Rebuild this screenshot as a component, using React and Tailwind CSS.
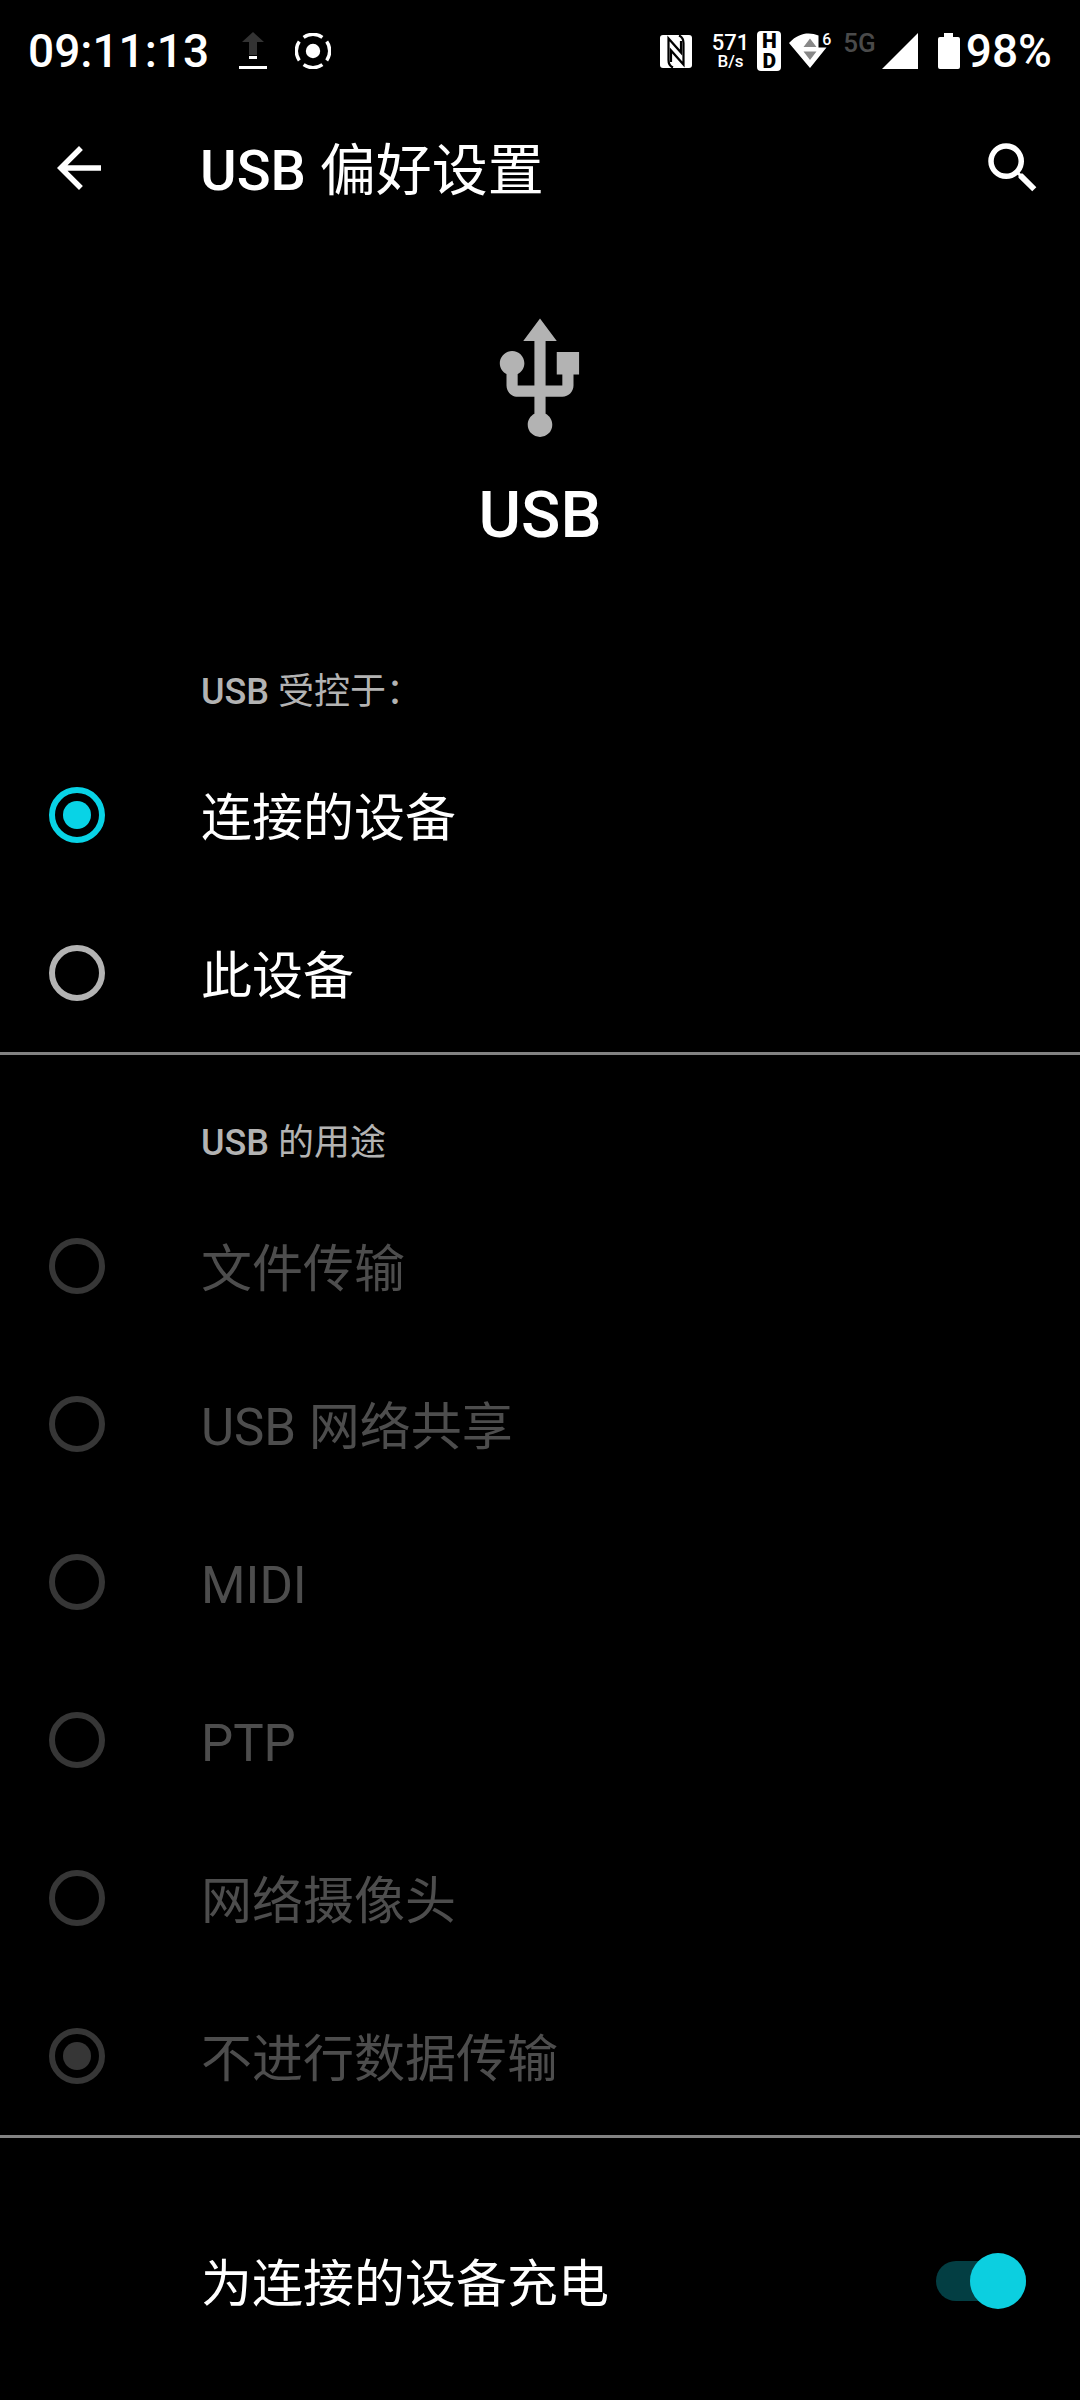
import { useState } from "react";
import { MdArrowBack, MdSearch, MdUsb } from "react-icons/md";

const CONTROLLERS = ["连接的设备", "此设备"];

const USES = [
  "文件传输",
  "USB 网络共享",
  "MIDI",
  "PTP",
  "网络摄像头",
  "不进行数据传输",
];

function StatusBar() {
  return (
    <div className="flex h-[102px] items-center justify-between px-7 font-medium">
      <div className="flex items-center">
        <span className="text-[46px] leading-none">09:11:13</span>

        {/* upload */}
        <svg viewBox="0 0 28 38" className="ml-[30px] h-[38px] w-7">
          <path d="M14 0L25 10H18V23H10V10H3z" fill="#333" />
          <path d="M10 24h8v3h-8zM0 34h28v3H0z" fill="#fff" />
        </svg>

        {/* screen recorder */}
        <svg viewBox="0 0 36 36" className="ml-7 size-9" fill="none" stroke="#fff">
          <circle cx="18" cy="18" r="7.2" fill="#fff" stroke="none" />
          <path
            strokeWidth="3.4"
            d="M8.6 4.3A16.300 16.300 0 0 1 27.4 4.3M31.7 8.6A16.300 16.300 0 0 1 31.7 27.4M27.4 31.7A16.300 16.300 0 0 1 8.6 31.7M4.3 27.4A16.300 16.300 0 0 1 4.3 8.6"
          />
        </svg>
      </div>

      <div className="flex items-center">
        {/* NFC */}
        <svg viewBox="0 0 32 33" className="h-[33px] w-8">
          <rect width="32" height="33" rx="3" fill="#fff" />
          <path
            d="M13 32.500C9.500 31 8.500 29 8.500 25V3.500L21 17.500V6M19 0.500C22.500 2 23.500 4 23.500 8V29.500L11 15.500V27"
            fill="none"
            stroke="#000"
            strokeWidth="2.200"
          />
        </svg>

        <div className="ml-5 flex flex-col items-center">
          <span className="text-[22px] leading-5">571</span>
          <span className="text-[17px] leading-4">B/s</span>
        </div>

        {/* HD badge */}
        <div className="ml-2 flex h-10 w-6 flex-col items-center justify-center rounded-sm bg-white text-[21px] font-black leading-5 text-black">
          <span>H</span>
          <span>D</span>
        </div>

        {/* Wi-Fi 6 */}
        <div className="relative ml-2 h-9 w-[42px]">
          <svg viewBox="0 0 42 36" className="h-9 w-[42px]">
            <path d="M0 10C10 -1 21 -1 29.500 2.500V14.500H37.500L21 35z" fill="#fff" />
            <path d="M21 5.500L27.500 14H14.500zM14.500 18.500H27.500L21 27z" fill="#888" />
          </svg>
          <span className="absolute -top-px right-0 text-[16px] leading-4">6</span>
        </div>

        <span className="ml-3 pb-4 text-[26px] leading-none text-[#4a4a4a]">5G</span>

        {/* signal */}
        <svg viewBox="0 0 36 36" className="ml-1.5 size-9">
          <path d="M36 0V36H0z" fill="#fff" />
        </svg>

        {/* battery */}
        <svg viewBox="0 0 22 36" className="ml-5 h-9 w-[22px]">
          <path d="M6 0H15V4H20Q22 4 22 6V34Q22 36 20 36H2Q0 36 0 34V6Q0 4 2 4H6z" fill="#fff" />
        </svg>
        <span className="ml-1.5 text-[46px] leading-none">98%</span>
      </div>
    </div>
  );
}

function SectionTitle({ children }) {
  return (
    <h2 className="pt-16 pb-5 pl-[201px] text-[36px] leading-12 text-[#b3b3b3]">
      <span className="font-medium">USB</span> {children}
    </h2>
  );
}

function RadioRow({ name, label, checked, disabled, onChange }) {
  return (
    <label className="flex h-[158px] items-center pl-[49px] text-[51px] text-white has-disabled:text-[#4d4d4d]">
      <input
        type="radio"
        name={name}
        checked={checked}
        disabled={disabled}
        onChange={onChange}
        className="mr-24 grid size-14 shrink-0 appearance-none place-items-center rounded-full border-6 border-[#b3b3b3] text-[#08d3e6] checked:border-current before:size-7 before:rounded-full checked:before:bg-current disabled:border-[#363636] disabled:text-[#363636]"
      />
      <span className="pt-2">{label}</span>
    </label>
  );
}

export default function App() {
  const [controller, setController] = useState("连接的设备");
  const [charging, setCharging] = useState(true);

  return (
    <div
      lang="zh-CN"
      className="min-h-screen bg-black font-['Roboto','Noto_Sans_CJK_SC',sans-serif] text-white"
    >
      <StatusBar />

      <header className="flex h-33 items-center pr-[34px] pl-[46px]">
        <button type="button" aria-label="返回">
          <MdArrowBack className="size-[66px]" />
        </button>
        <h1 className="ml-22 flex-1 pt-1.5 text-[56px] leading-16">
          <span className="font-medium">USB</span> 偏好设置
        </h1>
        <button type="button" aria-label="搜索">
          <MdSearch className="size-[66px]" />
        </button>
      </header>

      <main>
        <div className="flex flex-col items-center pt-[79px] pb-[49px]">
          <MdUsb className="size-[134px] text-[#b3b3b3]" />
          <p className="mt-7 text-[65px] leading-20 font-medium">USB</p>
        </div>

        <section className="border-b-3 border-[#828282]">
          <SectionTitle>受控于：</SectionTitle>
          {CONTROLLERS.map((item) => (
            <RadioRow
              key={item}
              name="controller"
              label={item}
              checked={controller === item}
              onChange={() => setController(item)}
            />
          ))}
        </section>

        <section className="border-b-3 border-[#828282]">
          <SectionTitle>的用途</SectionTitle>
          {USES.map((item) => (
            <RadioRow
              key={item}
              name="use"
              label={item}
              checked={item === "不进行数据传输"}
              disabled
              onChange={() => {}}
            />
          ))}
        </section>

        <section className="pt-16">
          <label className="flex h-[158px] items-center justify-between pr-[54px] pl-[201px] text-[51px]">
            <span className="pt-2">为连接的设备充电</span>
            <input
              type="checkbox"
              role="switch"
              checked={charging}
              onChange={(e) => setCharging(e.target.checked)}
              className="flex h-10 w-[90px] appearance-none items-center rounded-full bg-[#333] before:size-14 before:shrink-0 before:rounded-full before:bg-[#b3b3b3] checked:justify-end checked:bg-[#033e43] checked:before:bg-[#0ccfe0]"
            />
          </label>
        </section>
      </main>
    </div>
  );
}
